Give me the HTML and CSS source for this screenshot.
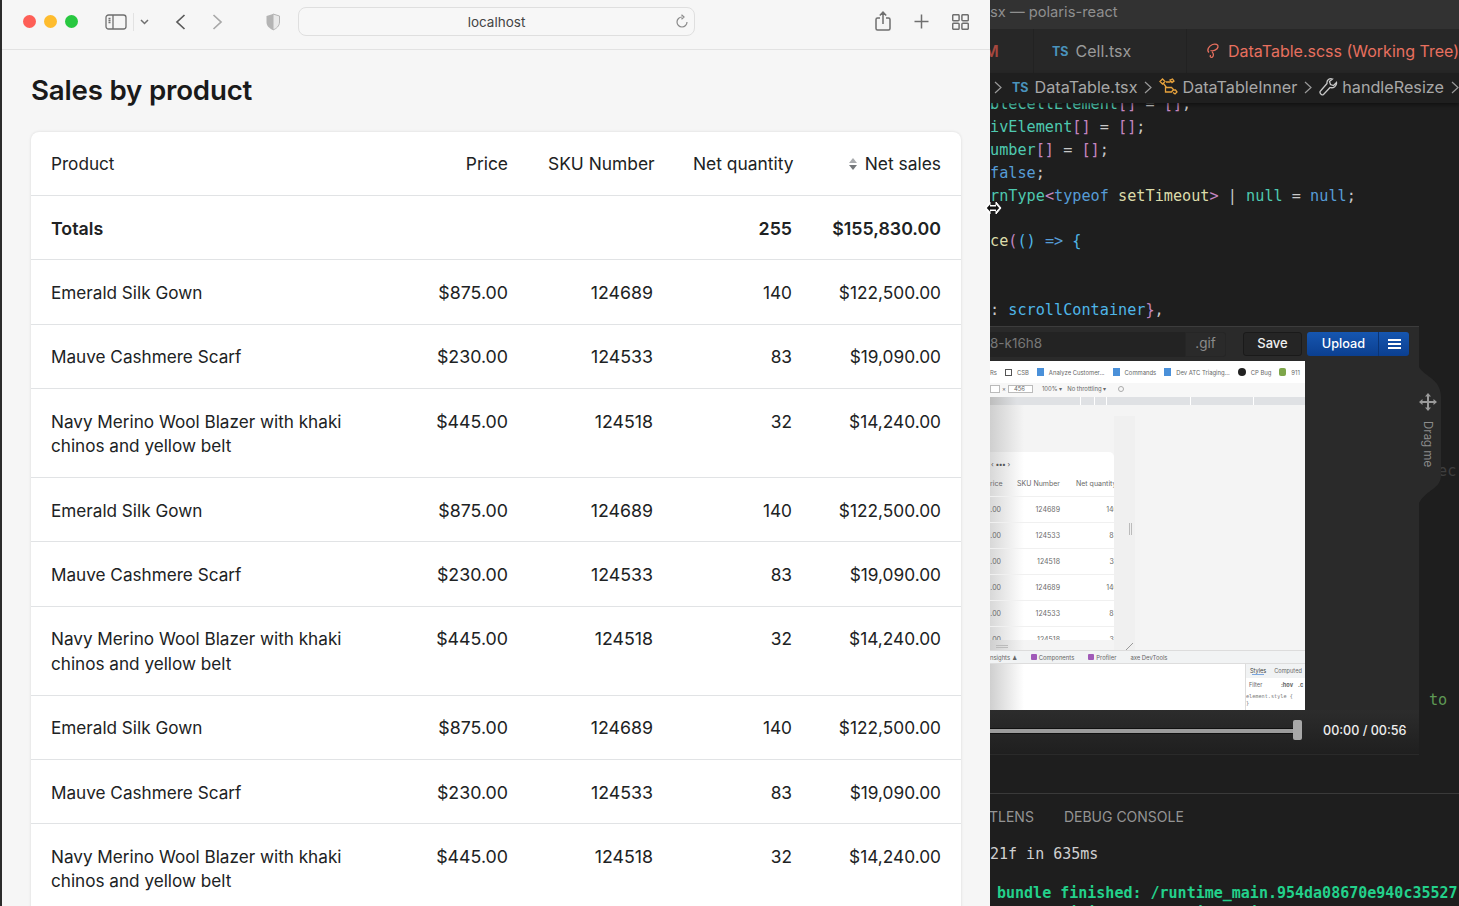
FILE: index.html
```html
<!DOCTYPE html>
<html lang="en">
<head>
<meta charset="utf-8">
<title>Sales by product</title>
<link rel="stylesheet" href="styles.css">
</head>
<body>
<div class="screen">
  <section class="browser">
    <header class="toolbar">
      <div class="lights"><i class="light red"></i><i class="light yellow"></i><i class="light green"></i></div>
      <svg class="ico sidebar" width="22" height="16" viewBox="0 0 22 16"><rect x="1" y="1" width="20" height="14" rx="2.5"/><path d="M8 1v14M3.5 4.5h2M3.5 6.5h2M3.5 8.5h2"/></svg>
      <i class="tool-sep"></i>
      <svg class="ico chev" width="9" height="6" viewBox="0 0 9 6"><path d="M1 1l3.5 3.5L8 1"/></svg>
      <svg class="ico back" width="11" height="16" viewBox="0 0 11 16"><path d="M9.5 1L2 8l7.500 7"/></svg>
      <svg class="ico fwd" width="11" height="16" viewBox="0 0 11 16"><path d="M1.500 1L9 8l-7.500 7"/></svg>
      <svg class="shield" width="16" height="18" viewBox="0 0 16 18"><path class="shield-l" d="M8 1L1.500 3v6c0 4 3 6.500 6.500 8z"/><path class="shield-r" d="M8 1l6.500 2v6c0 4-3 6.500-6.500 8z"/></svg>
      <div class="url"><span class="url-text">localhost</span>
        <svg class="ico reload" width="14" height="15" viewBox="0 0 14 15"><path d="M7 3a5 5 0 1 0 5 5M6.500 .8L9 3 6.500 5.200"/></svg>
      </div>
      <div class="tool-right">
        <svg class="ico" width="16" height="21" viewBox="0 0 16 21"><path d="M5 7H2.500A1.500 1.500 0 0 0 1 8.500v9A1.500 1.500 0 0 0 2.500 19h11a1.500 1.500 0 0 0 1.500-1.500v-9A1.500 1.500 0 0 0 13.500 7H11M8 13V1.500M4.800 4.500L8 1.200l3.200 3.300"/></svg>
        <svg class="ico" width="15" height="15" viewBox="0 0 15 15"><path d="M7.500 .5v14M.5 7.500h14"/></svg>
        <svg class="ico" width="17" height="16" viewBox="0 0 17 16"><rect x=".7" y=".7" width="6.400" height="6" rx="1"/><rect x="9.900" y=".7" width="6.400" height="6" rx="1"/><rect x=".7" y="9.300" width="6.400" height="6" rx="1"/><rect x="9.900" y="9.300" width="6.400" height="6" rx="1"/></svg>
      </div>
    </header>
    <main class="page">
      <h1 class="title">Sales by product</h1>
      <div class="card">
        <table class="sales">
          <colgroup><col class="c-product"><col class="c-price"><col class="c-sku"><col class="c-qty"><col class="c-net"></colgroup>
          <thead>
            <tr><th class="left">Product</th><th>Price</th><th>SKU Number</th><th>Net quantity</th>
              <th><span class="sort"><i class="up"></i><i class="down"></i></span>Net sales</th></tr>
          </thead>
          <tbody>
            <tr class="totals"><td class="left">Totals</td><td></td><td></td><td>255</td><td>$155,830.00</td></tr>
            <tr><td class="left">Emerald Silk Gown</td><td>$875.00</td><td>124689</td><td>140</td><td>$122,500.00</td></tr>
            <tr><td class="left">Mauve Cashmere Scarf</td><td>$230.00</td><td>124533</td><td>83</td><td>$19,090.00</td></tr>
            <tr><td class="left">Navy Merino Wool Blazer with khaki chinos and yellow belt</td><td>$445.00</td><td>124518</td><td>32</td><td>$14,240.00</td></tr>
            <tr><td class="left">Emerald Silk Gown</td><td>$875.00</td><td>124689</td><td>140</td><td>$122,500.00</td></tr>
            <tr><td class="left">Mauve Cashmere Scarf</td><td>$230.00</td><td>124533</td><td>83</td><td>$19,090.00</td></tr>
            <tr><td class="left">Navy Merino Wool Blazer with khaki chinos and yellow belt</td><td>$445.00</td><td>124518</td><td>32</td><td>$14,240.00</td></tr>
            <tr><td class="left">Emerald Silk Gown</td><td>$875.00</td><td>124689</td><td>140</td><td>$122,500.00</td></tr>
            <tr><td class="left">Mauve Cashmere Scarf</td><td>$230.00</td><td>124533</td><td>83</td><td>$19,090.00</td></tr>
            <tr><td class="left">Navy Merino Wool Blazer with khaki chinos and yellow belt</td><td>$445.00</td><td>124518</td><td>32</td><td>$14,240.00</td></tr>
          </tbody>
        </table>
      </div>
    </main>
  </section>

  <section class="editor">
    <div class="titlebar">sx — polaris-react</div>
    <div class="tabs">
      <div class="tab tab-m"><span class="m-letter">M</span></div>
      <div class="tab tab-cell"><span class="ts">TS</span>Cell.tsx</div>
      <div class="tab tab-scss">
        <svg class="scss-ico" width="14" height="16" viewBox="0 0 14 16"><path d="M3 9.500C.5 7.500 2.500 3 6.500 1.500c3-1 6 0 5.500 2.500-.5 2.500-5 4.500-7.500 3.500M6 9c1.500 1 2 3.500.5 5-1.500 1-3 0-2-2"/></svg>
        DataTable.scss (Working Tree)</div>
    </div>
    <div class="crumbs">
      <svg class="crumb-sep first" width="8" height="13" viewBox="0 0 8 13"><path d="M1 1l6 5.500L1 12"/></svg>
      <span class="ts">TS</span><span>DataTable.tsx</span>
      <svg class="crumb-sep" width="8" height="13" viewBox="0 0 8 13"><path d="M1 1l6 5.500L1 12"/></svg>
      <svg class="crumb-ico" width="19" height="18" viewBox="0 0 19 18"><path d="M1 3.500L3.500 1 6 3.500 3.500 6zM4.500 5.500l3 4M7 4h4.500M11 2l2.500-1L15 3l-2 1.500zM6.500 9.500h6l2 2-2 2.500h-6zM14 12h2.500l1.500 2-2 2-2-1.500"/></svg>
      <span>DataTableInner</span>
      <svg class="crumb-sep" width="8" height="13" viewBox="0 0 8 13"><path d="M1 1l6 5.500L1 12"/></svg>
      <svg class="crumb-ico wrench" width="19" height="19" viewBox="0 0 19 19"><path d="M17.500 4.500l-3 3-3-1-1-3 3-2.500c-3-1-6 1-5.500 4.500L1.500 13c-1.500 1.500 1 5 3 3.500l6.500-7c3.500 1 7-1.500 6.500-5z"/></svg>
      <span>handleResize</span>
      <svg class="crumb-sep" width="8" height="13" viewBox="0 0 8 13"><path d="M1 1l6 5.500L1 12"/></svg>
    </div>
    <div class="code-wrap">
      <pre class="code"><span class="g">bleCellElement</span><span class="m">[]</span> = <span class="m">[]</span>;
<span class="g">ivElement</span><span class="m">[]</span> = <span class="m">[]</span>;
<span class="g">umber</span><span class="m">[]</span> = <span class="m">[]</span>;
<span class="b">false</span>;
<span class="g">rnType</span><span class="m">&lt;</span><span class="b">typeof</span> <span class="y">setTimeout</span><span class="m">&gt;</span> | <span class="g">null</span> = <span class="b">null</span>;

<span class="y">ce</span><span class="m">(</span><span class="c">()</span> <span class="b">=&gt;</span> <span class="c">{</span>


: <span class="c">scrollContainer</span><span class="m">}</span>,






<span class="dim">                                                 ec</span>









<span class="cm">                                                to</span></pre>
    </div>
    <div class="panel">
      <div class="panel-tabs"><span>TLENS</span><span>DEBUG CONSOLE</span></div>
      <pre class="term">21f in 635ms

<b class="ok">bundle finished: /runtime_main.954da08670e940c35527</b>
<b class="ok">bundle finished: /runtime~main.954da08670e940c35527</b></pre>
    </div>

    <div class="recorder">
      <div class="rec-head">
        <div class="rec-name">8-k16h8</div>
        <div class="rec-ext">.gif</div>
        <button class="btn-save">Save</button>
        <div class="btn-upload"><span class="up-label">Upload</span><span class="up-menu"><i></i><i></i><i></i></span></div>
      </div>
      <div class="rec-body">
        <div class="shot">
          <div class="bookmarks">
            <span>Rs</span>
            <span class="bm"><i class="bm-check"></i>CSB</span>
            <span class="bm"><i class="bm-doc"></i>Analyze Customer...</span>
            <span class="bm"><i class="bm-doc"></i>Commands</span>
            <span class="bm"><i class="bm-doc"></i>Dev ATC Triaging...</span>
            <span class="bm"><i class="bm-gh"></i>CP Bug</span>
            <span class="bm"><i class="bm-shop"></i>911</span>
          </div>
          <div class="device">
            <span class="dim-box w1"></span><span class="x">×</span><span class="dim-box">456</span>
            <span class="dev-opt">100% ▾</span><span class="dev-opt">No throttling ▾</span><i class="dev-block"></i>
          </div>
          <div class="ruler"><i></i><i></i><i></i><i></i><i></i><i></i></div>
          <div class="stage">
            <div class="mini-wrap">
              <div class="mini-card">
                <div class="mini-nav">‹ <b>•••</b> ›</div>
                <div class="mini-row head"><span>rice</span><span>SKU Number</span><span class="nq">Net quantity</span></div>
                <div class="mini-row"><span>.00</span><span>124689</span><span class="val">140</span></div>
                <div class="mini-row"><span>.00</span><span>124533</span><span class="val">83</span></div>
                <div class="mini-row"><span>.00</span><span>124518</span><span class="val">32</span></div>
                <div class="mini-row"><span>.00</span><span>124689</span><span class="val">140</span></div>
                <div class="mini-row"><span>.00</span><span>124533</span><span class="val">83</span></div>
                <div class="mini-row"><span>.00</span><span>124518</span><span class="val">32</span></div>
              </div>
              <div class="mini-side"><i class="grip"></i></div>
              <i class="hgrip"></i>
              <i class="corner"></i>
            </div>
          </div>
          <div class="dev-tabs"><span>nsights ♟</span><span class="dt"><i></i>Components</span><span class="dt"><i></i>Profiler</span><span>axe DevTools</span></div>
          <div class="dev-pane">
            <div class="styles">
              <div class="st-tabs"><span class="on">Styles</span><span>Computed</span></div>
              <div class="st-filter"><span>Filter</span><b>:hov</b><b>.c</b></div>
              <div class="st-rule">element.style {<br>}</div>
            </div>
          </div>
        </div>
        <div class="rec-side"></div>
      </div>
      <div class="rec-foot">
        <div class="track"><i class="thumb"></i></div>
        <div class="time">00:00 / 00:56</div>
      </div>
      <div class="drag">
        <svg width="18" height="18" viewBox="0 0 18 18"><path d="M9 0l3 3.500H6zM9 18l3-3.500H6zM0 9l3.500-3v6zM18 9l-3.500-3v6z"/><rect x="3" y="8" width="12" height="2"/><rect x="8" y="3" width="2" height="12"/></svg>
        <span>Drag me</span>
      </div>
    </div>
  </section>

  <svg class="cursor" width="18" height="14" viewBox="0 0 18 14"><path class="cur-o" d="M6 1L1 7l5 6V9.500h6V13l5-6-5-6v3.500H6z"/><path class="cur-i" d="M6 3.500L2.800 7 6 10.500V8.500h6v2L15.200 7 12 3.500v2H6z"/></svg>
</div>
</body>
</html>
```
FILE: styles.css
```css
* { box-sizing: border-box; }
html, body { margin: 0; height: 100%; }
body { background: #1e1e1e; font-family: Inter, "Liberation Sans", sans-serif; overflow: hidden; }
.screen { position: relative; display: grid; grid-template-columns: 990px 1fr; width: 1459px; height: 906px; overflow: hidden; }

/* browser */
.browser { background: #f6f6f6; border-left: 2px solid #2b2b2b; height: 906px; overflow: hidden; }
.toolbar { display: flex; align-items: center; height: 50px; padding: 0 0 6px 21px; border-bottom: 1px solid #e2e2e2; background: #f6f6f6; }
.lights { display: flex; gap: 8px; margin-right: 27px; }
.light { width: 13px; height: 13px; border-radius: 50%; display: block; }
.red { background: #fe5f57; } .yellow { background: #febc2e; } .green { background: #28c840; }
.ico { fill: none; stroke: #6f6f6f; stroke-width: 1.5; flex: none; display: block; }
.sidebar { stroke-width: 1.300; }
.tool-sep { width: 1px; height: 18px; background: #e2e2e2; margin: 0 6px; }
.back { margin-left: 26px; stroke: #5a5a5a; stroke-width: 1.700; }
.fwd { margin-left: 26px; stroke: #a8a8a8; stroke-width: 1.700; }
.shield { margin-left: 42px; display: block; flex: none; }
.shield-l { fill: #b4b4b4; }
.shield-r { fill: #e9e9e9; stroke: #b4b4b4; stroke-width: 1; }
.url { position: relative; width: 397px; height: 29px; margin-left: 17px; border: 1px solid #dfdfdf; border-radius: 8px; background: #f7f7f7; display: flex; align-items: center; justify-content: center; }
.url-text { font-size: 13.500px; color: #444; }
.reload { position: absolute; right: 5px; top: 6px; stroke: #8a8a8a; stroke-width: 1.200; }
.tool-right { display: flex; align-items: center; gap: 23px; margin-left: 180px; }

.page { padding: 23px 29px 0; }
.title { margin: 0 0 24.600px; font-size: 27.700px; line-height: 34px; font-weight: 600; color: #1a1a1a; letter-spacing: -.2px; }
.card { background: #fff; border-radius: 8px 8px 0 0; box-shadow: 0 0 3px rgba(0,0,0,.12); width: 930px; }
.sales { width: 930px; table-layout: fixed; border-collapse: separate; border-spacing: 0; font-size: 17.300px; line-height: 24.4px; color: #202223; }
.c-product { width: 340px; } .c-price { width: 157px; } .c-sku { width: 145px; } .c-qty { width: 139px; } .c-net { width: 149px; }
.sales th, .sales td { padding: 20.5px 20px 18.5px; text-align: right; vertical-align: top; font-weight: 400; border-bottom: 1px solid #e1e3e5; }
.sales th { white-space: nowrap; font-size: 17.400px; }
.sales th:nth-child(3), .sales th:nth-child(4) { padding-right: 21px; }
.sales .left { text-align: left; padding-right: 24px; font-size: 17.150px; }
.sales td:nth-child(2), .sales td:nth-child(3) { font-size: 17.800px; }
.sales .totals td { font-weight: 600; font-size: 17.800px; }
.sort { display: inline-flex; flex-direction: column; gap: 2px; margin-right: 8px; vertical-align: 7px; }
.up, .down { display: block; width: 0; height: 0; border-left: 4.500px solid transparent; border-right: 4.500px solid transparent; }
.up { border-bottom: 5px solid #a9abae; }
.down { border-top: 5px solid #75787b; }

/* editor */
.editor { position: relative; background: #1e1e1e; height: 906px; overflow: hidden; color: #ccc; display: flex; flex-direction: column; }
.titlebar { height: 29px; flex: none; background: #323232; color: #8f8f8f; font-size: 14.700px; line-height: 24px; white-space: nowrap; }
.tabs { height: 44px; flex: none; display: flex; background: #272727; font-size: 16px; white-space: nowrap; overflow: hidden; }
.tab { flex: none; display: flex; align-items: center; height: 44px; border-right: 1px solid #222; }
.tab-m { width: 44px; color: #a5483f; font-weight: 600; overflow: hidden; }
.m-letter { margin-left: -6px; }
.tab-cell { width: 153px; padding-left: 18px; color: #9a9a9a; }
.tab-scss { padding-left: 19px; color: #e8705f; border-right: 0; }
.scss-ico { fill: none; stroke: #e8705f; stroke-width: 1.300; margin-right: 8px; flex: none; }
.ts { color: #4a93bd; font-size: 12.500px; font-weight: 700; margin-right: 7px; }
.crumbs { position: relative; z-index: 1; height: 30px; flex: none; display: flex; align-items: center; padding-bottom: 2px; background: #1f1f1f; color: #a8a8a8; font-size: 16.200px; white-space: nowrap; overflow: hidden; box-shadow: 0 2px 4px rgba(0,0,0,.45); }
.crumbs .ts { margin: 0 6px 0 3px; }
.crumb-sep { fill: none; stroke: #9a9a9a; stroke-width: 1.200; margin: 0 7px; flex: none; }
.crumb-sep.first { margin-left: 4px; }
.crumb-ico { fill: none; stroke: #e8a33d; stroke-width: 1.300; margin: 0 4px 0 0; flex: none; }
.wrench { stroke: #c8c8c8; }
.code-wrap { height: 691px; flex: none; overflow: hidden; border-bottom: 1px solid #3a3a3a; }
.code { margin: -10px 0 0; font-family: "DejaVu Sans Mono", "Liberation Mono", monospace; font-size: 15.2px; line-height: 22.9px; color: #c8c8c8; white-space: pre; }
.g { color: #4ec9b0; } .m { color: #c586c0; } .b { color: #569cd6; } .y { color: #dcdcaa; } .c { color: #4fb6e8; }
.dim { color: #3e3e3e; } .cm { color: #5f9955; }
.panel { flex: 1; min-height: 0; overflow: hidden; }
.panel-tabs { display: flex; gap: 30px; height: 51px; margin-left: -1px; padding-top: 14px; font-size: 14px; line-height: 18px; color: #949494; white-space: nowrap; }
.term { margin: 0; font-family: "DejaVu Sans Mono", "Liberation Mono", monospace; font-size: 15px; line-height: 19.5px; color: #d0d0d0; white-space: pre; }
.ok { display: inline-block; padding-left: 7px; color: #23d18b; font-weight: 700; }

/* floating recorder */
.recorder { position: absolute; left: 0; top: 327px; width: 429px; height: 428px; background: #2a2a2a; box-shadow: 0 -1px 0 #3c3c3c; display: flex; flex-direction: column; }
.rec-head { height: 34px; flex: none; display: flex; align-items: center; font-size: 12.700px; }
.rec-name { width: 195px; height: 25px; line-height: 22px; background: #232323; color: #777; font-size: 13.500px; }
.rec-ext { width: 41px; height: 25px; line-height: 22px; background: #2a2a2a; color: #8a8a8a; text-align: center; border-radius: 0 3px 3px 0; box-shadow: inset 0 0 0 1px #262626; font-size: 13.500px; }
.btn-save { width: 59px; height: 24px; margin-left: 17px; padding: 0 0 2px; background: #252525; border: 1px solid #1a1a1a; border-radius: 3px; color: #f0f0f0; font: 500 13px Inter, sans-serif; }
.btn-upload { width: 102px; height: 24px; margin-left: 5px; display: flex; border-radius: 3px; background: linear-gradient(#1656b0, #0b3f90); color: #fff; font-weight: 500; }
.up-label { width: 72px; padding-left: 2px; text-align: center; line-height: 23px; border-right: 1px solid #0a3474; }
.up-menu { flex: 1; display: flex; flex-direction: column; justify-content: center; align-items: center; gap: 2px; }
.up-menu i { display: block; width: 13px; height: 2px; background: #fff; }
.rec-body { height: 349px; flex: none; display: flex; }
.shot { width: 315px; height: 349px; flex: none; background: #fff; overflow: hidden; display: flex; flex-direction: column; color: #666; font-size: 5.900px; white-space: nowrap; }
.rec-side { flex: 1; background: #2a2a2a; }
.bookmarks { height: 22px; flex: none; display: flex; align-items: center; gap: 8px; background: #fff; }
.bm { display: flex; align-items: center; gap: 5px; }
.bm-check { width: 7px; height: 7px; border: 1px solid #555; display: block; }
.bm-doc { width: 7px; height: 8px; background: #4a90d9; display: block; }
.bm-gh { width: 8px; height: 8px; border-radius: 50%; background: #222; display: block; }
.bm-shop { width: 7px; height: 8px; border-radius: 2px; background: #7ea64a; display: block; }
.device { height: 14px; flex: none; display: flex; align-items: center; padding-bottom: 3px; background: #f7f7f7; }
.dim-box { width: 25px; height: 8px; line-height: 6px; border: 1px solid #bbb; background: #fff; padding-left: 5px; }
.dim-box.w1 { width: 10px; }
.x { margin: 0 2px; }
.dev-opt { margin-left: 9px; }
.dev-opt + .dev-opt { margin-left: 5px; }
.dev-block { width: 6px; height: 6px; margin-left: 12px; border: 1px solid #aaa; border-radius: 50%; display: block; }
.ruler { height: 8px; flex: none; display: flex; gap: 1px; background: #fff; }
.ruler i { display: block; background: #dfe1e4; }
.ruler i:nth-child(1) { width: 90px; background: linear-gradient(90deg, #bdbdbd, #dfe1e4 30%); }
.ruler i:nth-child(2) { width: 13px; } .ruler i:nth-child(3) { width: 11px; } .ruler i:nth-child(4) { width: 83px; } .ruler i:nth-child(5) { width: 62px; } .ruler i:nth-child(6) { flex: 1; }
.stage { height: 245px; flex: none; background: #f4f4f4; }
.mini-wrap { position: relative; display: flex; height: 245px; padding-top: 47px; background: linear-gradient(90deg, #cfcfcf, #f4f4f4 34px); }
.mini-card { width: 124px; height: 188px; flex: none; overflow: hidden; background: linear-gradient(90deg, #d8d8d8, #fff 34px); border-radius: 0 5px 0 0; color: #6a6a6a; font-size: 7px; }
.mini-nav { height: 20px; line-height: 14px; padding: 6px 0 0 1px; color: #555; }
.mini-row { display: grid; grid-template-columns: 11px 59px 58px; height: 26px; align-items: center; border-bottom: 1px solid #f0f0f0; text-align: right; }
.mini-row.head { height: 25px; padding-bottom: 2px; }
.mini-row .nq { text-align: left; padding-left: 16px; }
.mini-side { flex: none; position: relative; width: 21px; margin-top: -36px; height: 234px; background: #f0f0f0; }
.grip { position: absolute; left: 15px; top: 107px; width: 3px; height: 12px; border: 1px solid #bbb; border-width: 0 1px; display: block; }
.hgrip { position: absolute; left: 6px; top: 240px; width: 12px; height: 3px; border: 1px solid #bbb; border-width: 1px 0; display: block; }
.corner { position: absolute; left: 136px; top: 238px; width: 7px; height: 7px; background: linear-gradient(135deg, transparent 45%, #999 45%, #999 55%, transparent 55%); display: block; }
.dev-tabs { height: 14px; flex: none; display: flex; align-items: center; gap: 14px; background: #f1f3f4; border-top: 1px solid #dcdcdc; border-bottom: 1px solid #ddd; }
.dt { display: flex; align-items: center; gap: 2px; }
.dt i { width: 6px; height: 6px; border-radius: 1px; background: #a05ab8; display: block; }
.dev-pane { flex: 1; display: flex; justify-content: flex-end; background: linear-gradient(90deg, #cfcfcf, #fff 34px); }
.styles { width: 60px; background: #fff; border-left: 1px solid #ddd; font-size: 5.600px; overflow: hidden; }
.st-tabs { height: 14px; display: flex; gap: 8px; padding-left: 4px; align-items: center; background: #f1f3f4; }
.st-tabs .on { box-shadow: 0 3px 0 -2px #7aa7e0; color: #444; }
.st-filter { height: 13px; display: flex; gap: 5px; align-items: center; padding-left: 3px; }
.st-filter span { width: 27px; }
.st-rule { font: 5.200px/7px "DejaVu Sans Mono", monospace; padding-top: 2px; color: #777; }
.rec-foot { height: 45px; flex: none; display: flex; align-items: center; padding-bottom: 3px; background: linear-gradient(#2c2c2c, #1f1f1f); border-bottom: 1px solid #2a2a2a; }
.track { position: relative; width: 307px; height: 6px; background: #9c9c9c; border-top: 1px solid #111; border-bottom: 1px solid #111; }
.thumb { position: absolute; right: -5px; top: -9px; width: 9px; height: 20px; border-radius: 2px; background: #a8a8a8; display: block; }
.time { margin-left: 26px; font-size: 12.600px; font-weight: 500; color: #eee; white-space: nowrap; }
.drag { position: absolute; left: 429px; top: 40px; width: 22px; height: 136px; background: #2a2a2a; clip-path: path("M0 0 C6 10 22 12 22 30 L22 108 C22 122 8 122 0 136 Z"); display: flex; flex-direction: column; align-items: center; padding: 26px 4px 0 0; color: #8c8c8c; font-size: 11.500px; }
.drag svg { fill: #9a9a9a; flex: none; }
.drag span { writing-mode: vertical-rl; margin-top: 10px; white-space: nowrap; }

.cursor { position: absolute; left: 984px; top: 201px; display: block; }
.cur-o { fill: #fff; stroke: #fff; }
.cur-i { fill: #111; }
```
